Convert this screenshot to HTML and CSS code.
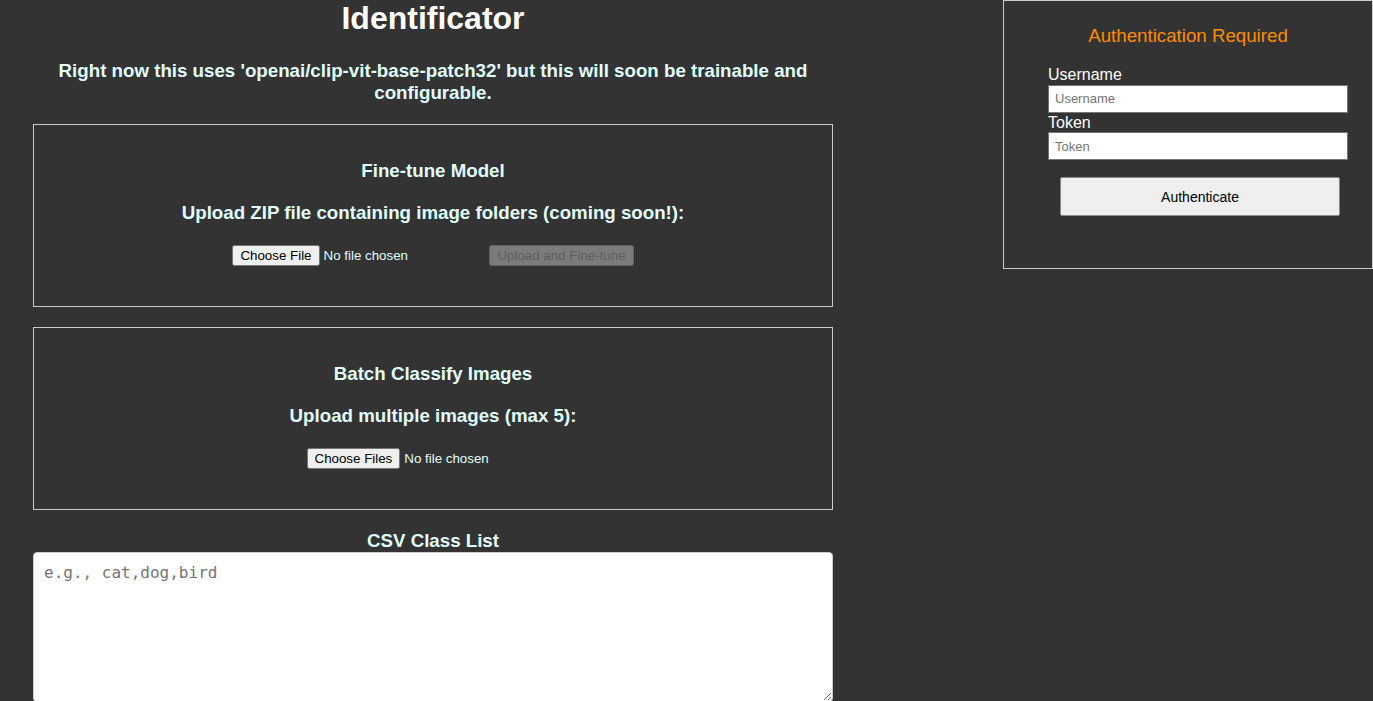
FILE: index.html
```html
<!DOCTYPE html>
<html lang="en">
<head>
<meta charset="utf-8">
<title>Identificator</title>
<link rel="stylesheet" href="styles.css">
</head>
<body>
<main class="main">
  <h1 class="title">Identificator</h1>
  <h3 class="subtitle">Right now this uses 'openai/clip-vit-base-patch32' but this will soon be trainable and configurable.</h3>

  <section class="card">
    <h3 class="card-title">Fine-tune Model</h3>
    <h3 class="card-label">Upload ZIP file containing image folders (coming soon!):</h3>
    <div class="controls">
      <input class="file" type="file" accept=".zip">
      <button class="action" type="button" disabled>Upload and Fine-tune</button>
    </div>
  </section>

  <section class="card">
    <h3 class="card-title">Batch Classify Images</h3>
    <h3 class="card-label">Upload multiple images (max 5):</h3>
    <div class="controls">
      <input class="file" type="file" multiple accept="image/*">
    </div>
  </section>

  <label class="csv-label" for="csv">CSV Class List</label>
  <textarea id="csv" class="csv" placeholder="e.g., cat,dog,bird"></textarea>
</main>

<aside class="auth">
  <h3 class="auth-title">Authentication Required</h3>
  <form class="auth-form">
    <label class="auth-label" for="user">Username</label>
    <input id="user" class="auth-input" type="text" placeholder="Username">
    <label class="auth-label" for="token">Token</label>
    <input id="token" class="auth-input" type="password" placeholder="Token">
    <button class="auth-btn" type="button">Authenticate</button>
  </form>
</aside>
</body>
</html>
```

FILE: styles.css
```css
html, body {
  margin: 0;
  padding: 0;
}

body {
  background: #333333;
  color: #e0ffff;
  font-family: "Liberation Sans", Arial, sans-serif;
  overflow: hidden;
}

.main {
  width: 800px;
  margin-left: 33px;
  text-align: center;
}

.title {
  margin: 0 0 23px;
  font-size: 32px;
  font-weight: bold;
  color: #ffffff;
  line-height: normal;
}

.subtitle {
  margin: 0 0 20px;
  font-size: 18.72px;
  font-weight: bold;
}

.card {
  box-sizing: border-box;
  width: 800px;
  height: 183px;
  border: 1px solid #cccccc;
  padding: 16px 20px 0;
  margin-bottom: 20px;
}

.card-title {
  margin: 19px 0 20px;
  font-size: 18.72px;
  font-weight: bold;
}

.card-label {
  margin: 0;
  font-size: 18.72px;
  font-weight: bold;
}

.controls {
  margin-top: 21px;
  display: flex;
  justify-content: center;
  align-items: center;
  gap: 4px;
  height: 21px;
}

.file {
  color: #e0ffff;
  font-family: "Liberation Sans", Arial, sans-serif;
  font-size: 13.333px;
}

.action {
  font-family: "Liberation Sans", Arial, sans-serif;
  font-size: 13.333px;
}

.csv-label {
  display: block;
  margin: 0;
  font-size: 18.72px;
  font-weight: bold;
  line-height: 22px;
}

.csv {
  display: block;
  box-sizing: border-box;
  width: 800px;
  height: 150px;
  margin: 0;
  padding: 10px;
  border: 1px solid #cccccc;
  border-radius: 4px;
  background: #ffffff;
  font-family: "DejaVu Sans Mono", monospace;
  font-size: 16px;
}

.csv::placeholder {
  color: #757575;
}

.auth {
  position: fixed;
  top: 0;
  right: 0;
  box-sizing: border-box;
  width: 370px;
  height: 269px;
  border: 1px solid #cccccc;
  background: #333333;
  padding-top: 24px;
}

.auth-title {
  margin: 0 0 19px;
  text-align: center;
  font-size: 18.72px;
  font-weight: normal;
  line-height: 22px;
  color: #ff8c00;
}

.auth-form {
  width: 304px;
  margin-left: 44px;
}

.auth-label {
  display: block;
  font-size: 16px;
  line-height: 18.5px;
  color: #ffffff;
}

.auth-input {
  display: block;
  box-sizing: border-box;
  width: 300px;
  height: 28px;
  margin: 0 0 1px;
  padding: 0 6px;
  border: 1px solid #767676;
  background: #ffffff;
  font-family: "Liberation Sans", Arial, sans-serif;
  font-size: 13px;
}

.auth-input::placeholder {
  color: #757575;
}

.auth-btn {
  display: block;
  box-sizing: border-box;
  width: 280px;
  height: 39px;
  margin: 17px auto 0;
  border: 1px solid #8a8a8a;
  border-radius: 2px;
  background: #efefef;
  color: #000000;
  font-family: "Liberation Sans", Arial, sans-serif;
  font-size: 14px;
}
```
